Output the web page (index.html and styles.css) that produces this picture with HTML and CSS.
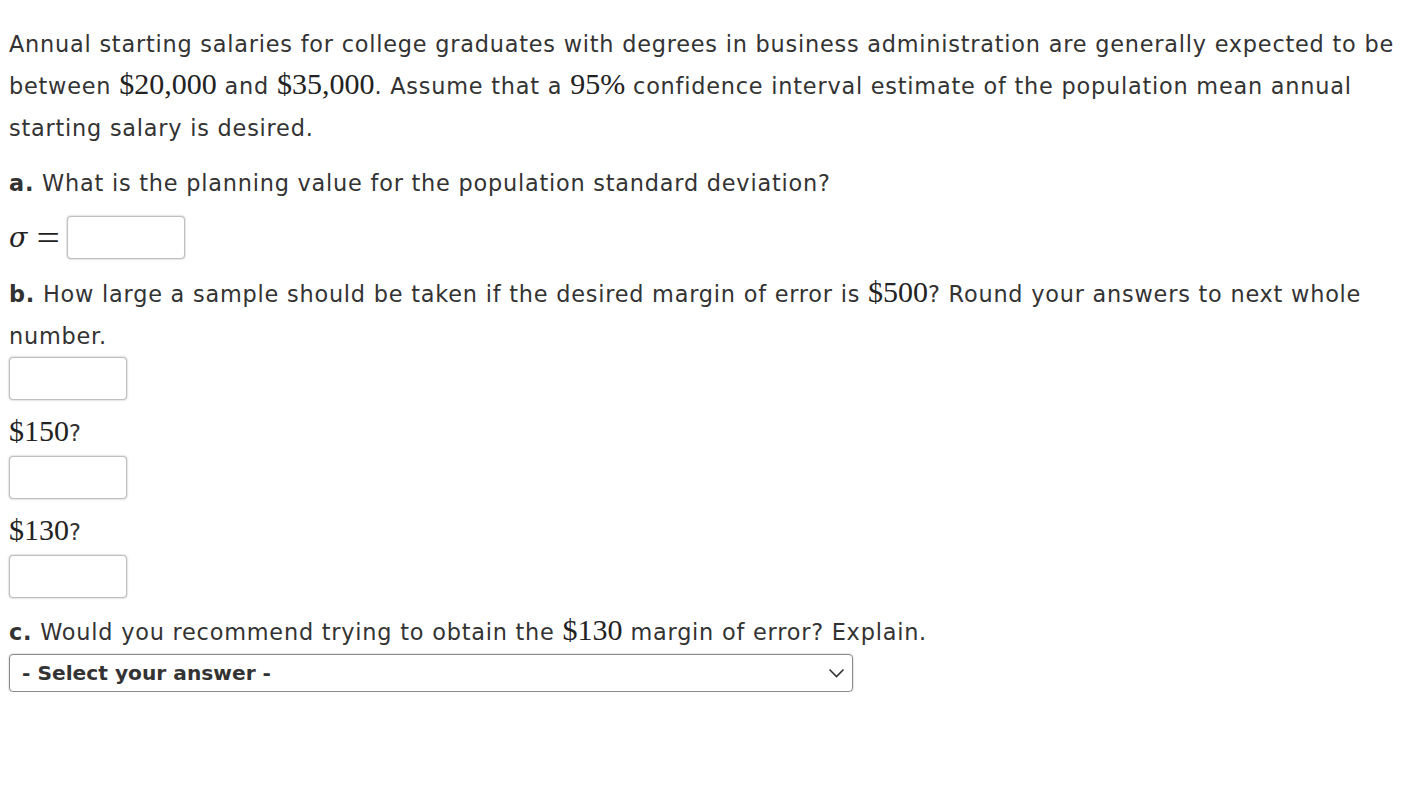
FILE: index.html
```html
<!DOCTYPE html>
<html>
<head>
<meta charset="utf-8">
<link rel="stylesheet" href="styles.css">
</head>
<body>
<div class="page">
  <p class="intro">Annual starting salaries for college graduates with degrees in business administration are generally expected to be between <span class="m">$20,000</span> and <span class="m">$35,000</span>. Assume that a <span class="m">95%</span> confidence interval estimate of the population mean annual starting salary is desired.</p>
  <p class="q qa"><b>a.</b> What is the planning value for the population standard deviation?</p>
  <div class="sigma-row"><span class="m sig"><i class="sig-s">σ</i><span class="eq">=</span></span><span class="box"></span></div>
  <p class="q qb"><b>b.</b> How large a sample should be taken if the desired margin of error is <span class="m">$500</span>? Round your answers to next whole number.</p>
  <div class="box box-b"></div>
  <p class="q qsub"><span class="m">$150</span>?</p>
  <div class="box box-s"></div>
  <p class="q qsub"><span class="m">$130</span>?</p>
  <div class="box box-s"></div>
  <p class="q qc"><b>c.</b> Would you recommend trying to obtain the <span class="m">$130</span> margin of error? Explain.</p>
  <div class="select"><span class="sel-text">- Select your answer -</span><svg class="chev" width="17" height="10" viewBox="0 0 17 10"><path d="M1.5 1.5 L8.5 8.5 L15.5 1.5" fill="none" stroke="#333" stroke-width="1.6"/></svg></div>
</div>
</body>
</html>
```
FILE: styles.css
```css
html, body { margin: 0; padding: 0; background: #fff; }
.page {
  padding: 23px 9px 0 9px;
  font-family: "DejaVu Sans", Verdana, sans-serif;
  font-size: 22.4px;
  letter-spacing: 0.78px;
  color: #333;
}
p { margin: 0; line-height: 42px; }
.m { font-family: "Liberation Serif", "DejaVu Serif", serif; font-size: 30px; color: #222; line-height: 1; letter-spacing: 0; }
.qa { margin-top: 13px; }
.sigma-row { margin-top: 12px; display: flex; align-items: center; height: 43px; }
.sig { width: 58px; display: flex; align-items: center; }
.sig-s { font-family: "DejaVu Serif", serif; font-style: italic; font-size: 27px; }
.eq { font-size: 36px; margin-left: 11px; transform: scaleX(1.15); display: inline-block; }
.box {
  display: block;
  width: 116px; height: 41px;
  border: 1px solid #c0c0c0;
  border-radius: 4px;
  box-shadow: 0 0 2px rgba(0,0,0,0.35);
  background: #fff;
}
.qb { margin-top: 14px; }
.box-b { margin-top: 0; }
.qsub { margin-top: 12px; }
.box-s { margin-top: 2px; }
.qc { margin-top: 13px; }
.select {
  margin-top: 1px;
  width: 823px; height: 36px;
  border: 1px solid #8a8a8a;
  border-radius: 4px;
  box-shadow: 0 0 2px rgba(0,0,0,0.3);
  display: flex; align-items: center; justify-content: space-between;
  padding: 0 7px 0 12px;
  box-sizing: content-box;
}
.sel-text { font-weight: bold; font-size: 20.2px; letter-spacing: 0; color: #333; }
.chev { display: block; }
```
